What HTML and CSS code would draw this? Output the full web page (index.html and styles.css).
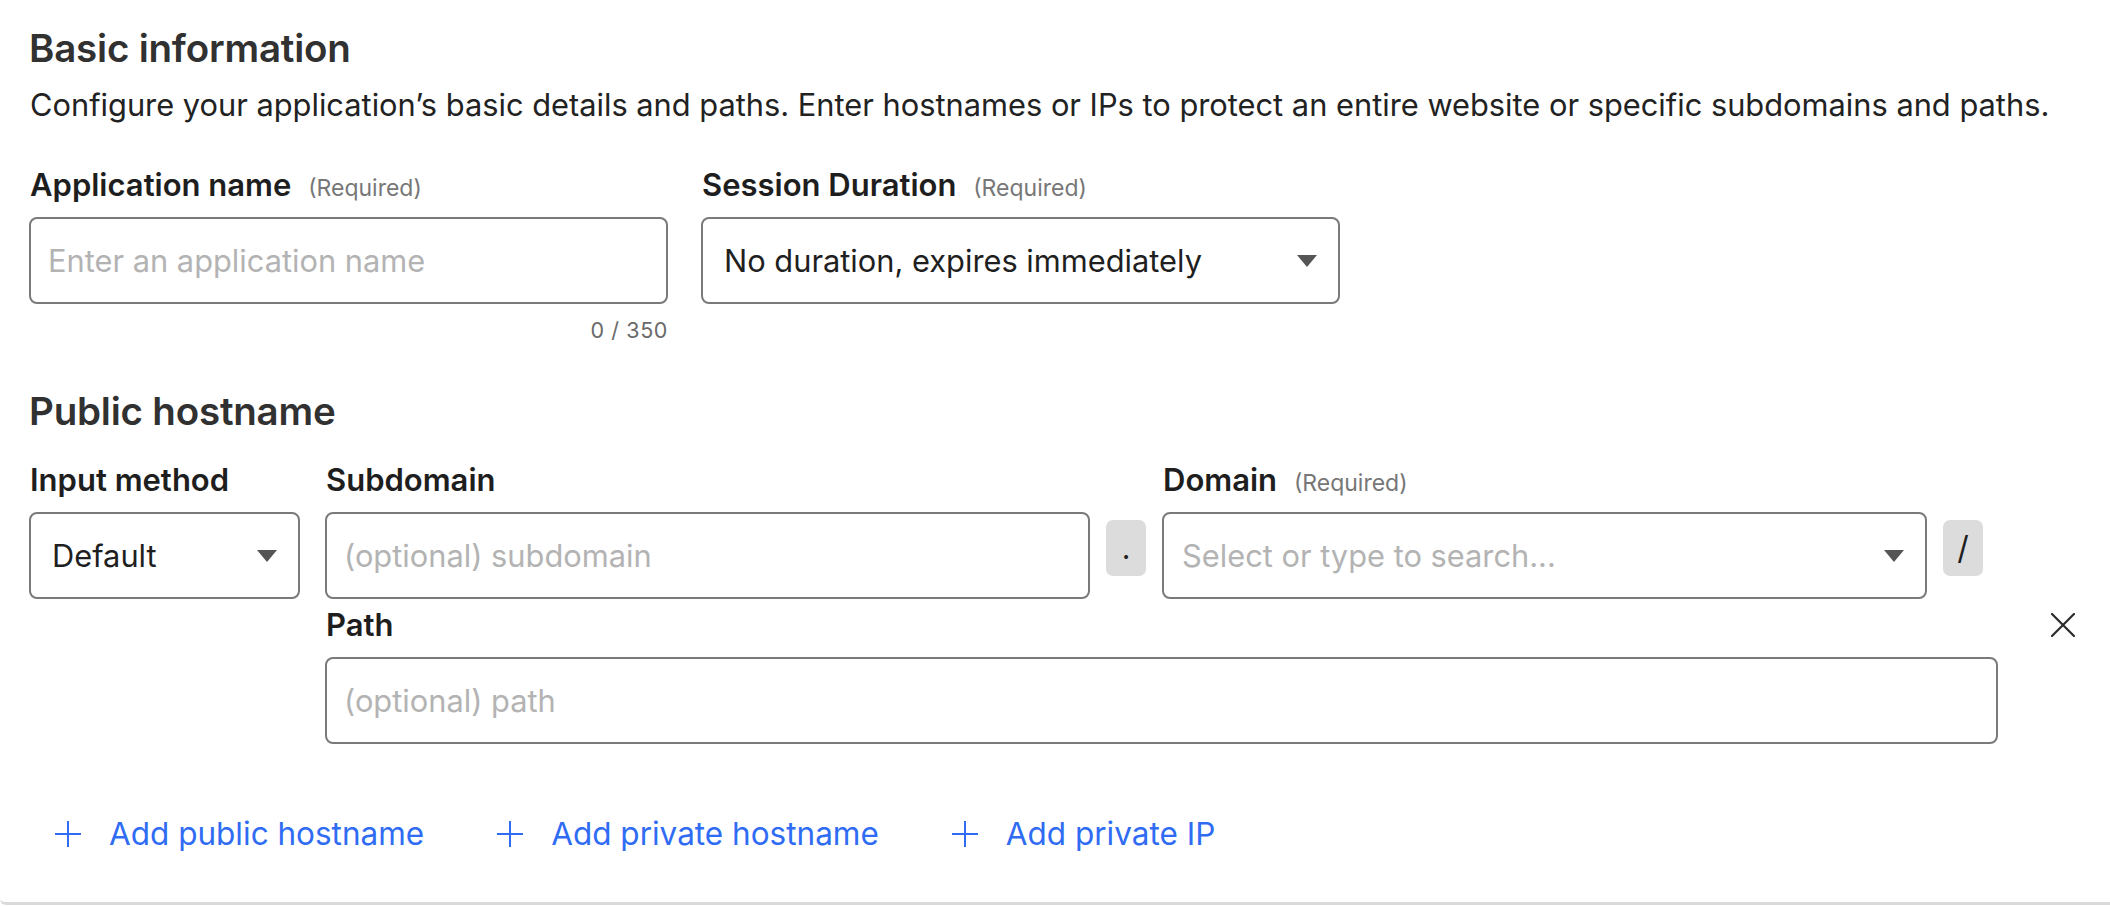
FILE: index.html
```html
<!DOCTYPE html>
<html lang="en">
<head>
<meta charset="utf-8">
<title>Basic information</title>
<link rel="stylesheet" href="styles.css">
</head>
<body>
<div class="card">
  <h2 class="heading">Basic information</h2>
  <p class="desc">Configure your application’s basic details and paths. Enter hostnames or IPs to protect an entire website or specific subdomains and paths.</p>

  <div class="row-basic">
    <div class="field field-half">
      <div class="label">Application name <span class="req">(Required)</span></div>
      <input class="input" type="text" placeholder="Enter an application name">
      <div class="counter">0 / 350</div>
    </div>
    <div class="field field-half">
      <div class="label">Session Duration <span class="req">(Required)</span></div>
      <div class="select"><span class="value">No duration, expires immediately</span><span class="caret"></span></div>
    </div>
  </div>

  <h2 class="heading heading-public">Public hostname</h2>

  <div class="row-host">
    <div class="field field-method">
      <div class="label">Input method</div>
      <div class="select"><span class="value">Default</span><span class="caret"></span></div>
    </div>
    <div class="field field-wide">
      <div class="label">Subdomain</div>
      <input class="input" type="text" placeholder="(optional) subdomain">
    </div>
    <div class="sep">.</div>
    <div class="field field-wide">
      <div class="label">Domain <span class="req">(Required)</span></div>
      <div class="select"><span class="value placeholder">Select or type to search...</span><span class="caret"></span></div>
    </div>
    <div class="sep sep-slash">/</div>
  </div>

  <div class="row-path">
    <div class="field field-path">
      <div class="label label-path">Path</div>
      <input class="input" type="text" placeholder="(optional) path">
    </div>
    <button class="close" type="button" aria-label="Remove">
      <svg width="24" height="24" viewBox="0 0 24 24"><path d="M1 1 L23 23 M23 1 L1 23" stroke="#2b2b2b" stroke-width="2.2" fill="none" stroke-linecap="round"/></svg>
    </button>
  </div>

  <div class="links">
    <a class="link" href="#"><svg class="plus" width="28" height="28" viewBox="0 0 28 28"><path d="M14 1 V27 M1 14 H27" stroke="#2f6cf3" stroke-width="2" fill="none"/></svg><span>Add public hostname</span></a>
    <a class="link" href="#"><svg class="plus" width="28" height="28" viewBox="0 0 28 28"><path d="M14 1 V27 M1 14 H27" stroke="#2f6cf3" stroke-width="2" fill="none"/></svg><span>Add private hostname</span></a>
    <a class="link" href="#"><svg class="plus" width="28" height="28" viewBox="0 0 28 28"><path d="M14 1 V27 M1 14 H27" stroke="#2f6cf3" stroke-width="2" fill="none"/></svg><span>Add private IP</span></a>
  </div>
</div>
</body>
</html>
```

FILE: styles.css
```css
* { box-sizing: border-box; }

html, body {
  margin: 0;
  padding: 0;
  background: #ffffff;
}

body {
  font-family: Inter, "Noto Sans", "Liberation Sans", sans-serif;
  color: #1f1f1f;
  width: 2110px;
  height: 906px;
  overflow: hidden;
}

.card {
  height: 905px;
  padding: 28px 0 0 29px;
  border-bottom: 3px solid #dadada;
  border-bottom-left-radius: 6px;
}

.heading {
  margin: 0;
  font-size: 38.5px;
  line-height: 40px;
  font-weight: 600;
  color: #313131;
  letter-spacing: -0.2px;
}

.desc {
  margin: 17px 0 0 1px;
  font-size: 30.8px;
  line-height: 40px;
  color: #222222;
  white-space: nowrap;
}

.row-basic {
  display: flex;
  gap: 33px;
  margin-top: 42px;
}

.field {
  display: flex;
  flex-direction: column;
}

.field-half { width: 639px; }

.label {
  height: 36px;
  font-size: 31px;
  line-height: 36px;
  font-weight: 600;
  color: #1e1e1e;
  padding-left: 1px;
  margin-bottom: 14px;
  white-space: nowrap;
}

.req {
  font-size: 23px;
  line-height: 1;
  font-weight: 400;
  color: #777777;
  margin-left: 9px;
}

.input,
.select {
  height: 87px;
  width: 100%;
  border: 2px solid #7a7a7a;
  border-radius: 8px;
  background: #ffffff;
  font-family: inherit;
  font-size: 30.8px;
  color: #1f1f1f;
  outline: none;
}

.input {
  padding: 0 17px;
}

.input::placeholder {
  color: #b3b3b3;
}

.select {
  display: flex;
  align-items: center;
  justify-content: space-between;
  padding: 0 21px 0 21px;
}

.select .value { white-space: nowrap; }

.select .placeholder {
  color: #b3b3b3;
  margin-left: -3px;
}

.caret {
  width: 0;
  height: 0;
  border-left: 10px solid transparent;
  border-right: 10px solid transparent;
  border-top: 12px solid #555555;
}

.counter {
  margin-top: 12px;
  font-size: 21.5px;
  line-height: 28px;
  color: #6a6a6a;
  text-align: right;
  letter-spacing: 0.6px;
}

.heading-public {
  margin-top: 47px;
}

.row-host {
  display: flex;
  align-items: flex-start;
  margin-top: 31px;
}

.field-method { width: 271px; margin-right: 25px; }
.field-wide { width: 765px; }

.sep {
  width: 40px;
  height: 56px;
  margin: 58px 16px 0;
  background: #dcdcdc;
  border-radius: 7px;
  display: flex;
  align-items: center;
  justify-content: center;
  font-size: 30px;
  line-height: 56px;
  color: #1f1f1f;
}

.sep-slash { font-size: 32px; }

.row-path {
  display: flex;
  align-items: flex-start;
  margin-top: 8px;
  padding-left: 296px;
}

.field-path { width: 1673px; }

.close {
  margin: 6px 0 0 53px;
  padding: 0;
  width: 24px;
  height: 24px;
  border: 0;
  background: transparent;
  display: flex;
}

.links {
  display: flex;
  margin-top: 70px;
  padding-left: 25px;
  gap: 72px;
}

.link {
  display: flex;
  align-items: center;
  gap: 27px;
  font-size: 31.5px;
  line-height: 40px;
  color: #2f6cf3;
  text-decoration: none;
}

.plus { flex: none; }
```
